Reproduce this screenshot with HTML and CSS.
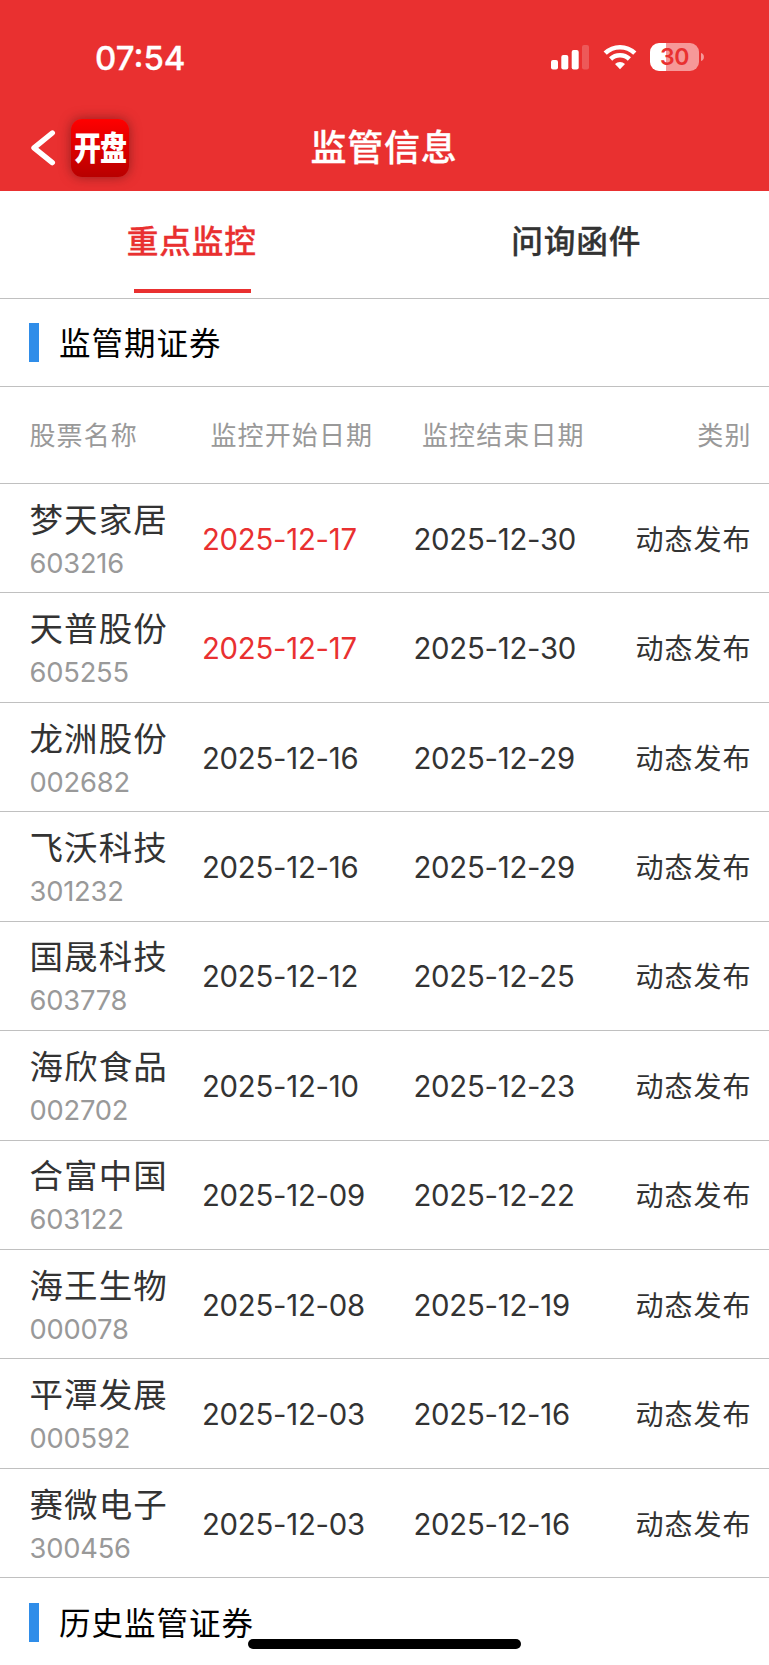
FILE: index.html
```html
<!DOCTYPE html>
<html lang="zh-CN">
<head>
	<meta charset="UTF-8">
	<title>监管信息</title>
	<link rel="stylesheet" href="styles.css">
</head>
<body>
	<header class="header">
		<div class="status">
			<span class="time">07:54</span>
			<div class="status-icons">
				<svg class="signal" width="40" height="26" viewBox="0 0 40 26">
					<rect x="1" y="16" width="7" height="9.5" rx="2" fill="#fff"/>
					<rect x="11.3" y="11" width="7" height="14.5" rx="2" fill="#fff"/>
					<rect x="21.7" y="6" width="7" height="19.5" rx="2" fill="#fff"/>
					<rect x="32" y="1" width="7" height="24.5" rx="2" fill="#fff" opacity=".2"/>
				</svg>
				<svg class="wifi" width="34" height="26" viewBox="0 0 34 26">
					<g fill="none" stroke="#fff" stroke-width="4.6">
						<path d="M2.2 9.2a21.2 21.2 0 0 1 29.6 0"/>
						<path d="M7.6 15a13.6 13.6 0 0 1 18.8 0"/>
					</g>
					<path d="M17 25.2l-5-5.1a7.2 7.2 0 0 1 10 0z" fill="#fff"/>
				</svg>
				<div class="battery"><span>30</span></div>
				<svg width="4" height="8" viewBox="0 0 4 8"><path d="M0 0a4.2 4.2 0 0 1 0 8z" fill="#f69898"/></svg>
			</div>
		</div>
		<div class="nav">
			<div class="nav-left">
				<svg width="26" height="38" viewBox="0 0 26 38">
					<path d="M22.3 4L4 18.8 22.3 33.6" fill="none" stroke="#fff" stroke-width="5.4" stroke-linecap="round" stroke-linejoin="round"/>
				</svg>
				<div class="logo"><span>开盘</span></div>
			</div>
			<h1>监管信息</h1>
		</div>
	</header>

	<div class="tabs">
		<div class="tab active"><span>重点监控</span></div>
		<div class="tab"><span>问询函件</span></div>
	</div>

	<div class="section"><span>监管期证券</span></div>
	<div class="list">
		<div class="row head">
			<div>股票名称</div>
			<div>监控开始日期</div>
			<div>监控结束日期</div>
			<div>类别</div>
		</div>
		<div class="row">
			<div class="stock"><b>梦天家居</b><i>603216</i></div>
			<div class="date red">2025-12-17</div>
			<div class="date">2025-12-30</div>
			<div class="type">动态发布</div>
		</div>
		<div class="row">
			<div class="stock"><b>天普股份</b><i>605255</i></div>
			<div class="date red">2025-12-17</div>
			<div class="date">2025-12-30</div>
			<div class="type">动态发布</div>
		</div>
		<div class="row">
			<div class="stock"><b>龙洲股份</b><i>002682</i></div>
			<div class="date">2025-12-16</div>
			<div class="date">2025-12-29</div>
			<div class="type">动态发布</div>
		</div>
		<div class="row">
			<div class="stock"><b>飞沃科技</b><i>301232</i></div>
			<div class="date">2025-12-16</div>
			<div class="date">2025-12-29</div>
			<div class="type">动态发布</div>
		</div>
		<div class="row">
			<div class="stock"><b>国晟科技</b><i>603778</i></div>
			<div class="date">2025-12-12</div>
			<div class="date">2025-12-25</div>
			<div class="type">动态发布</div>
		</div>
		<div class="row">
			<div class="stock"><b>海欣食品</b><i>002702</i></div>
			<div class="date">2025-12-10</div>
			<div class="date">2025-12-23</div>
			<div class="type">动态发布</div>
		</div>
		<div class="row">
			<div class="stock"><b>合富中国</b><i>603122</i></div>
			<div class="date">2025-12-09</div>
			<div class="date">2025-12-22</div>
			<div class="type">动态发布</div>
		</div>
		<div class="row">
			<div class="stock"><b>海王生物</b><i>000078</i></div>
			<div class="date">2025-12-08</div>
			<div class="date">2025-12-19</div>
			<div class="type">动态发布</div>
		</div>
		<div class="row">
			<div class="stock"><b>平潭发展</b><i>000592</i></div>
			<div class="date">2025-12-03</div>
			<div class="date">2025-12-16</div>
			<div class="type">动态发布</div>
		</div>
		<div class="row">
			<div class="stock"><b>赛微电子</b><i>300456</i></div>
			<div class="date">2025-12-03</div>
			<div class="date">2025-12-16</div>
			<div class="type">动态发布</div>
		</div>
	</div>
	<div class="section last"><span>历史监管证券</span></div>
	<div class="home-bar"></div>
</body>
</html>
```
FILE: styles.css
```css
*{
	box-sizing: border-box;
}
body{
	margin: 0;
	height: 1665px;
	overflow: hidden;
	background: #fff;
	color: #333;
	font-family: Inter, "Noto Sans CJK SC", sans-serif;
}
.header{
	height: 191px;
	background: #e93030;
	color: #fff;
}
.status{
	display: flex;
	justify-content: space-between;
	align-items: center;
	height: 114px;
	padding: 0 64px 0 95px;
}
.time{
	padding-top: 1px;
	font-size: 33px;
	font-weight: 500;
	line-height: 40px;
	-webkit-text-stroke: .3px;
}
.status-icons{
	display: flex;
	align-items: center;
}
.wifi{
	margin: 0 13px 0 13px;
}
.battery{
	width: 49px;
	height: 28px;
	margin-right: 2px;
	border-radius: 9px;
	background: linear-gradient(to right, #fff 15.5px, #f69898 15.5px);
	color: #e93030;
	font-size: 23px;
	font-weight: 600;
	line-height: 29px;
	letter-spacing: -.4px;
	text-align: center;
}
.nav{
	display: grid;
	grid-template-columns: 1fr auto 1fr;
	align-items: center;
	height: 68px;
}
.nav-left{
	display: flex;
	align-items: center;
	padding-left: 30px;
}
.logo{
	display: flex;
	align-items: center;
	justify-content: center;
	width: 58px;
	height: 58px;
	margin-left: 15px;
	border-radius: 11px;
	background: linear-gradient(#f00, #b80000);
	box-shadow: 0 0 12px rgba(90, 20, 20, .6);
}
.logo span{
	flex: none;
	font-size: 27px;
	font-weight: 900;
	line-height: 58px;
	letter-spacing: -1px;
	transform: translateY(1px) scaleY(1.22);
}
h1{
	margin: 0 1px 0 0;
	font-size: 36px;
	font-weight: 500;
	line-height: 50px;
	letter-spacing: .7px;
	-webkit-text-stroke: .3px;
}
.tabs{
	display: flex;
	height: 108px;
	border-bottom: 1px solid #c0c0c0;
}
.tab{
	flex: 1;
	display: flex;
	flex-direction: column;
	align-items: center;
	padding-top: 26px;
	font-size: 31.7px;
	font-weight: 500;
	line-height: 49px;
	letter-spacing: .8px;
	-webkit-text-stroke: .3px;
}
.tab span{
	margin-right: 1px;
}
.active{
	color: #e93030;
}
.active::after{
	content: "";
	width: 117px;
	height: 4px;
	margin-top: 23px;
	background: #e93030;
}
.section{
	display: flex;
	align-items: center;
	height: 88px;
	padding-left: 29px;
	border-bottom: 1px solid #c0c0c0;
	color: #000;
	font-size: 31.5px;
	letter-spacing: 1px;
}
.section span{
	padding-bottom: 3px;
}
.section::before{
	content: "";
	width: 10px;
	height: 39px;
	margin-right: 20px;
	background: #2f8de9;
}
.last{
	border-bottom: none;
}
.row{
	display: grid;
	grid-template-columns: 172.5px 211.5px 1fr auto;
	align-items: center;
	height: 109.43px;
	padding: 0 17.5px 0 29.5px;
	border-bottom: 1px solid #c0c0c0;
}
.head{
	height: 97px;
	padding-bottom: 3px;
	color: #999;
	font-size: 26px;
	letter-spacing: 1.1px;
}
.head div:nth-child(2),
.head div:nth-child(3){
	padding-left: 8.5px;
}
.stock{
	padding-top: 5px;
}
.stock b,
.stock i{
	display: block;
	font-style: normal;
	font-weight: 400;
}
.stock b{
	font-size: 33.5px;
	line-height: 46px;
	letter-spacing: 1.1px;
}
.stock i{
	color: #999;
	font-size: 27.3px;
	line-height: 42px;
	letter-spacing: -.2px;
}
.date{
	padding-top: 2px;
	font-size: 29.3px;
	letter-spacing: -.25px;
}
.type{
	padding-bottom: 1px;
	font-size: 28px;
	letter-spacing: 1px;
}
.red{
	color: #e93030;
}
.home-bar{
	position: fixed;
	left: 248px;
	bottom: 16px;
	width: 273px;
	height: 10px;
	border-radius: 5px;
	background: #000;
}
```
